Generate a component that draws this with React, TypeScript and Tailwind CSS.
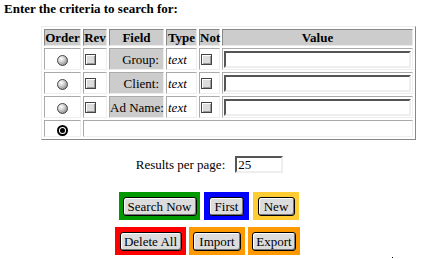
import React from 'react'

const hd = "h-[16px] p-0 bg-[#cccccc] border border-t-[#888] border-l-[#888] border-b-[#e8e8e8] border-r-[#e8e8e8] font-bold text-center"
const td = "p-0 border border-t-[#aaa] border-l-[#aaa] border-b-[#eee] border-r-[#eee]"

function Radio({ checked }: { checked?: boolean }) {
    if (checked) {
        return (
            <span className="inline-flex w-[11px] h-[11px] rounded-full border-2 border-black bg-white items-center justify-center align-middle">
                <span className="w-[5px] h-[5px] rounded-full bg-black" />
            </span>
        )
    }
    return <span className="inline-block w-[11px] h-[11px] rounded-full border border-[#444] bg-[radial-gradient(circle_at_35%_30%,#ffffff,#cfcfcf_40%,#6a6a6a)] align-middle" />
}

function Check() {
    return <span className="block w-[11px] h-[11px] border border-[#444] bg-[#dcdcdc] shadow-[inset_1px_1px_0_#fff,inset_-1px_-1px_0_#999]" />
}

function Input({ value, w }: { value?: string, w: string }) {
    return (
        <div className={`${w} h-[17px] bg-white border-2 border-t-[#555] border-l-[#555] border-b-[#eee] border-r-[#eee] text-[13px] leading-[13px] pl-[1px] flex items-center`}>
            {value}
        </div>
    )
}

function Btn({ label, box, bw, w }: { label: string, box: string, bw: string, w: string }) {
    return (
        <div className={`${box} ${bw} h-[28px] flex justify-center pt-[5px]`}>
            <div className={`${w} h-[19px] rounded-[3px] border border-black bg-[#dcdcdc] shadow-[inset_1px_1px_0_#fff,inset_-1px_-1px_0_#777] flex items-center justify-center text-[13px] leading-none`}>
                {label}
            </div>
        </div>
    )
}

const rows = ['Group:', 'Client:', 'Ad Name:']

export default function App() {
    return (
        <div className="w-[421px] h-[259px] bg-white text-black font-['Liberation_Serif',serif] text-[13px] overflow-hidden">
            <div className="pl-[4px] pt-[1px] font-bold leading-[15px]">Enter the criteria to search for:</div>
            <div className="pl-[41px] mt-[10px]">
                <table className="table-fixed w-[375px] border-separate border-spacing-[2px] border border-t-[#eee] border-l-[#eee] border-b-[#888] border-r-[#888] leading-[15px]">
                    <thead>
                        <tr>
                            <th className={`${hd} w-[37px]`}>Order</th>
                            <th className={`${hd} w-[24px]`}>Rev</th>
                            <th className={`${hd} w-[55px]`}>Field</th>
                            <th className={`${hd} w-[31px]`}>Type</th>
                            <th className={`${hd} w-[21px]`}>Not</th>
                            <th className={`${hd} w-[191px]`}>Value</th>
                        </tr>
                    </thead>
                    <tbody>
                        {rows.map(r => (
                            <tr key={r} className="h-[22px]">
                                <td className={`${td} text-center`}><Radio /></td>
                                <td className={`${td} pl-[1px]`}><Check /></td>
                                <td className={`${td} bg-[#cccccc] text-right pr-[4px] whitespace-nowrap`}>{r}</td>
                                <td className={`${td} italic pl-[1px]`}>text</td>
                                <td className={`${td} pl-[1px]`}><Check /></td>
                                <td className={`${td} px-[1px]`}><Input w="w-[187px]" /></td>
                            </tr>
                        ))}
                        <tr className="h-[17px]">
                            <td className={`${td} text-center`}><Radio checked /></td>
                            <td className={td} colSpan={5}></td>
                        </tr>
                    </tbody>
                </table>
            </div>
            <div className="mt-[15px] flex justify-center items-center pr-[2px]">
                <span>Results per page:</span>
                <div className="ml-[10px]"><Input value="25" w="w-[48px]" /></div>
            </div>
            <div className="mt-[17px] flex justify-center gap-[4px] pr-[3px]">
                <Btn label="Search Now" box="bg-[#009900]" bw="w-[81px]" w="w-[74px]" />
                <Btn label="First" box="bg-[#0000ff]" bw="w-[45px]" w="w-[35px]" />
                <Btn label="New" box="bg-[#ffcc33]" bw="w-[46px]" w="w-[37px]" />
            </div>
            <div className="mt-[7px] flex justify-center gap-[3px] pr-[6px]">
                <Btn label="Delete All" box="bg-[#ff0000]" bw="w-[71px]" w="w-[62px]" />
                <Btn label="Import" box="bg-[#ff9900]" bw="w-[56px]" w="w-[48px]" />
                <Btn label="Export" box="bg-[#ff9900]" bw="w-[52px]" w="w-[44px]" />
            </div>
            <div className="ml-[392px] mt-[2px] w-px h-px bg-black" />
        </div>
    )
}
